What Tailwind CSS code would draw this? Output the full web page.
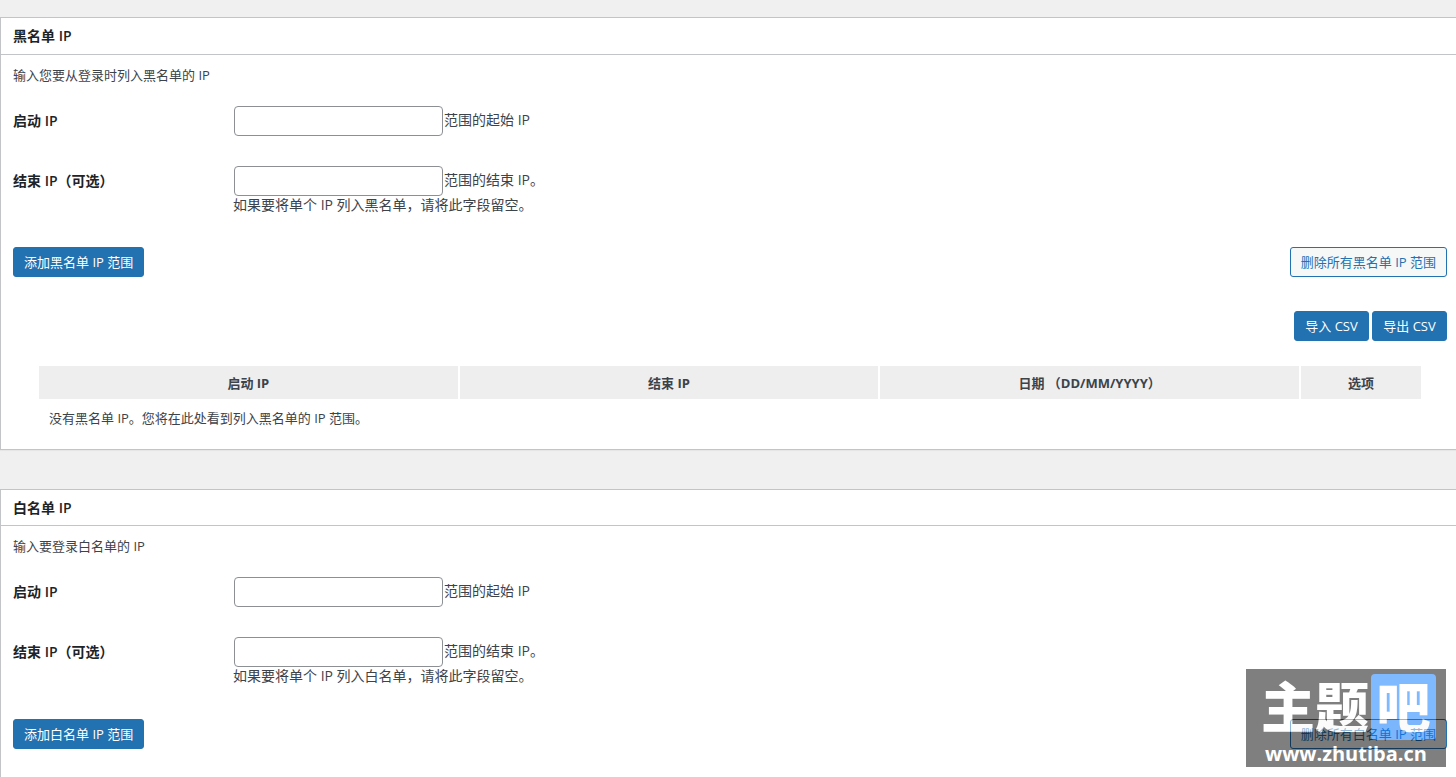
<!DOCTYPE html>
<html lang="zh-CN">
<head>
    <meta charset="UTF-8">
    <meta name="viewport" content="width=device-width, initial-scale=1.0">
    <title>IP 黑名单 / 白名单</title>
    <script src="https://cdn.jsdelivr.net/npm/@tailwindcss/browser@4"></script>
</head>
<body class="relative bg-[#f0f0f0] min-h-screen flex flex-col overflow-x-hidden pt-[17px] gap-[39px] font-['Open_Sans','Noto_Sans_CJK_SC',sans-serif] text-[13px] leading-5 text-[#3c434a]">

    <!-- Blacklist -->
    <section class="bg-white border-y border-l border-[#c3c4c7] shadow-[0_1px_1px_rgba(0,0,0,0.04)]">
        <h2 class="h-[37px] flex items-center px-3 border-b border-[#c3c4c7] text-sm font-semibold text-[#1d2327]">黑名单 IP</h2>
        <div class="pl-3 pr-[9px] pt-[10px] pb-[19px]">
            <p>输入您要从登录时列入黑名单的 IP</p>
            <form>
                <div class="flex items-start mt-[21px] text-sm">
                    <label for="black-start" class="w-[220px] leading-[30px] font-semibold text-[#1d2327]">启动 IP</label>
                    <div class="flex items-center">
                        <input id="black-start" type="text" class="w-[209px] h-[30px] mx-px px-2 border border-[#8c8f94] rounded-sm bg-white">
                        <span class="pb-[2px]">范围的起始 IP</span>
                    </div>
                </div>
                <div class="flex items-start mt-[30px] text-sm">
                    <label for="black-end" class="w-[220px] leading-[30px] font-semibold text-[#1d2327]">结束 IP（可选）</label>
                    <div>
                        <div class="flex items-center">
                            <input id="black-end" type="text" class="w-[209px] h-[30px] mx-px px-2 border border-[#8c8f94] rounded-sm bg-white">
                            <span class="pb-[2px]">范围的结束 IP。</span>
                        </div>
                        <p class="leading-[18px]">如果要将单个 IP 列入黑名单，请将此字段留空。</p>
                    </div>
                </div>
                <div class="flex justify-between mt-[33px]">
                    <button type="submit" class="h-[30px] px-[10px] border border-[#2271b1] rounded-[3px] bg-[#2271b1] text-white">添加黑名单 IP 范围</button>
                    <button type="button" class="h-[30px] px-[10px] border border-[#2271b1] rounded-[3px] bg-[#f6f7f7] text-[#2271b1]">删除所有黑名单 IP 范围</button>
                </div>
            </form>
            <div class="flex justify-end gap-[3px] mt-[34px]">
                <button type="button" class="w-[75px] h-[30px] border border-[#2271b1] rounded-[3px] bg-[#2271b1] text-white">导入 CSV</button>
                <button type="button" class="w-[75px] h-[30px] border border-[#2271b1] rounded-[3px] bg-[#2271b1] text-white">导出 CSV</button>
            </div>
            <div class="mx-6 mt-[23px]">
                <table class="w-full table-fixed border-separate border-spacing-[2px]">
                    <thead>
                        <tr class="h-[33px] bg-[#eeeeee]">
                            <th class="font-bold">启动 IP</th>
                            <th class="font-bold">结束 IP</th>
                            <th class="font-bold">日期 （DD/MM/YYYY）</th>
                            <th class="w-[120px] font-bold">选项</th>
                        </tr>
                    </thead>
                    <tbody>
                        <tr>
                            <td colspan="4" class="px-[10px] pt-[7px]">没有黑名单 IP。您将在此处看到列入黑名单的 IP 范围。</td>
                        </tr>
                    </tbody>
                </table>
            </div>
        </div>
    </section>

    <!-- Whitelist -->
    <section class="grow bg-white border-t border-l border-[#c3c4c7]">
        <h2 class="h-[36px] flex items-center px-3 border-b border-[#c3c4c7] text-sm font-semibold text-[#1d2327]">白名单 IP</h2>
        <div class="pl-3 pr-[9px] pt-[10px] pb-[19px]">
            <p>输入要登录白名单的 IP</p>
            <form>
                <div class="flex items-start mt-[21px] text-sm">
                    <label for="white-start" class="w-[220px] leading-[30px] font-semibold text-[#1d2327]">启动 IP</label>
                    <div class="flex items-center">
                        <input id="white-start" type="text" class="w-[209px] h-[30px] mx-px px-2 border border-[#8c8f94] rounded-sm bg-white">
                        <span class="pb-[2px]">范围的起始 IP</span>
                    </div>
                </div>
                <div class="flex items-start mt-[30px] text-sm">
                    <label for="white-end" class="w-[220px] leading-[30px] font-semibold text-[#1d2327]">结束 IP（可选）</label>
                    <div>
                        <div class="flex items-center">
                            <input id="white-end" type="text" class="w-[209px] h-[30px] mx-px px-2 border border-[#8c8f94] rounded-sm bg-white">
                            <span class="pb-[2px]">范围的结束 IP。</span>
                        </div>
                        <p class="leading-[18px]">如果要将单个 IP 列入白名单，请将此字段留空。</p>
                    </div>
                </div>
                <div class="flex justify-between mt-[34px]">
                    <button type="submit" class="h-[30px] px-[10px] border border-[#2271b1] rounded-[3px] bg-[#2271b1] text-white">添加白名单 IP 范围</button>
                    <button type="button" class="h-[30px] px-[10px] border border-[#2271b1] rounded-[3px] bg-[#f6f7f7] text-[#2271b1]">删除所有白名单 IP 范围</button>
                </div>
            </form>
        </div>
    </section>

    <!-- Site badge -->
    <div class="fixed right-[10px] bottom-[10px] w-[200px] h-[98px] pt-[5px] bg-black opacity-50 text-white font-bold pointer-events-none">
        <div class="flex items-center justify-end gap-[2px] pr-[10px] text-[54px] leading-[66px] font-black">
            <span>主题</span>
            <span class="w-[65px] h-[66px] rounded-[4px] bg-[#0075ff] text-center">吧</span>
        </div>
        <p class="text-center text-xl leading-7">www.zhutiba.cn</p>
    </div>
</body>
</html>
